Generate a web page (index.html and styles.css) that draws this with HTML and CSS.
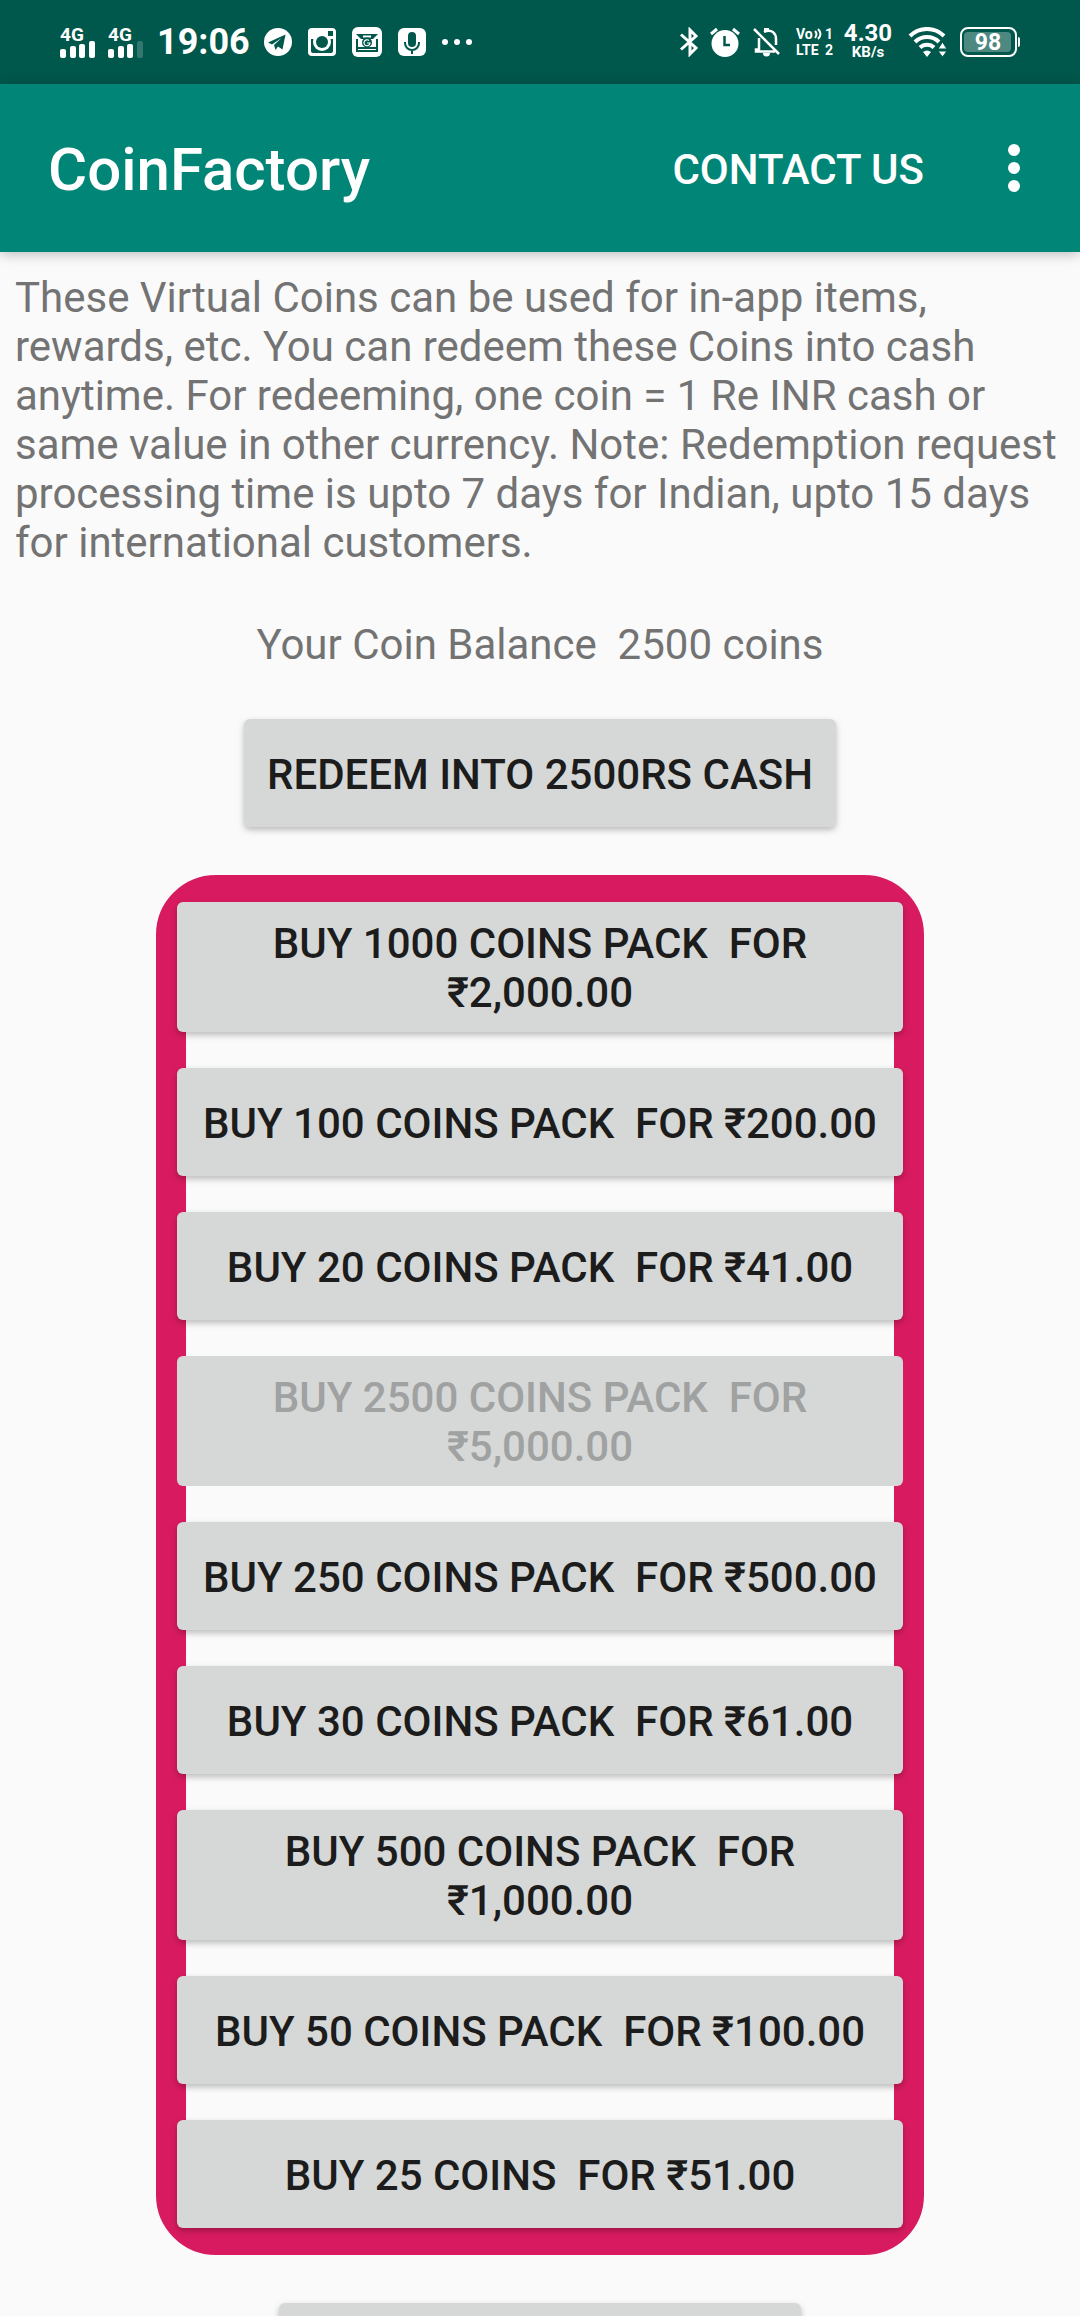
FILE: index.html
```html
<!DOCTYPE html>
<html lang="en">

<head>
    <title>CoinFactory</title>
    <meta charset="utf-8" />
    <meta name="viewport" content="width=device-width, initial-scale=1">
    <link rel="stylesheet" href="styles.css">
</head>

<body>
    <div class="statusbar">
        <div class="status-left">
            <svg class="signal" width="35" height="32" viewBox="0 0 35 32" fill="#fff">
                <text x="0" y="15" class="net-label">4G</text>
                <rect x="0" y="23" width="6" height="9" rx="2" />
                <rect x="10" y="20" width="6" height="12" rx="2" />
                <rect x="19" y="18" width="6" height="14" rx="2" />
                <rect x="29" y="15" width="6" height="17" rx="2" />
            </svg>
            <svg class="signal" width="35" height="32" viewBox="0 0 35 32" fill="#fff">
                <text x="0" y="15" class="net-label">4G</text>
                <rect x="0" y="23" width="6" height="9" rx="2" />
                <rect x="10" y="20" width="6" height="12" rx="2" />
                <rect x="19" y="18" width="6" height="14" rx="2" />
                <rect x="29" y="15" width="6" height="17" rx="2" opacity=".2" />
            </svg>
            <span class="clock">19:06</span>
            <!-- telegram -->
            <svg width="28" height="28" viewBox="0 0 28 28">
                <circle cx="14" cy="14" r="14" fill="#fff" />
                <path d="M4 14.5 21.5 6.5 18.5 21.5 14 18.5 11.5 22 10 17 17.5 10 8 16.5Z" fill="#00574b" />
            </svg>
            <!-- camera -->
            <svg width="28" height="28" viewBox="0 0 28 28">
                <rect width="28" height="28" rx="4" fill="#fff" />
                <path d="M3 11H7A8 8 0 0 0 21 11H25V23Q25 25 23 25H5Q3 25 3 23Z" fill="#00574b" />
                <circle cx="14" cy="14" r="9" fill="#fff" />
                <circle cx="14" cy="14" r="6" fill="#00574b" />
                <rect x="20" y="3" width="5" height="5" fill="#00574b" />
            </svg>
            <!-- mail -->
            <svg width="30" height="30" viewBox="0 0 30 30" fill="none" stroke="#00574b" stroke-width="2">
                <rect width="30" height="30" rx="6" fill="#fff" stroke="none" />
                <path d="M4 7H26L21 12H9Z" fill="#00574b" stroke="none" />
                <path d="M11 9.5H19" stroke="#fff" />
                <path d="M5 12V24H25V12M5 21H25" />
                <circle cx="15" cy="15.500" r="5" fill="#00574b" stroke="none" />
                <path d="M17 13.500A3 3 0 1 0 18 16H15" stroke="#fff" stroke-width="1.200" />
            </svg>
            <!-- microphone -->
            <svg width="28" height="28" viewBox="0 0 28 28" fill="none" stroke="#00574b" stroke-width="2">
                <rect width="28" height="28" rx="6" fill="#fff" stroke="none" />
                <rect x="10" y="4" width="8" height="15" rx="4" fill="#00574b" stroke="none" />
                <path d="M7 14V15A7 7 0 0 0 21 15V14M14 22V26" />
            </svg>
            <svg width="30" height="6" viewBox="0 0 30 6" fill="#fff">
                <circle cx="3" cy="3" r="3" />
                <circle cx="15" cy="3" r="3" />
                <circle cx="27" cy="3" r="3" />
            </svg>
        </div>
        <div class="status-right">
            <!-- bluetooth -->
            <svg width="18" height="30" viewBox="0 0 18 30" fill="none" stroke="#fff" stroke-width="3">
                <path d="M1 7.500 16 21 10 27V3L16 9 1 22.500" />
            </svg>
            <!-- alarm -->
            <svg width="34" height="30" viewBox="0 0 34 30" fill="none" stroke="#fff" stroke-width="3">
                <circle cx="17" cy="16.500" r="13.500" fill="#fff" stroke="none" />
                <path d="M3 7 9 2M31 7 25 2" />
                <path d="M16.500 9V18H22" stroke="#00574b" stroke-width="2.500" />
            </svg>
            <!-- muted bell -->
            <svg width="34" height="30" viewBox="0 0 34 30" fill="none" stroke="#fff" stroke-width="2.500">
                <path d="M7 11V22.500H4V24.500H23M12 5C20 1 24 7 24 12V18M2 2 27 27" />
                <path d="M12 2.500H17" stroke-width="3" />
                <path d="M11 26H18A3.500 3.500 0 0 1 11 26Z" fill="#fff" stroke="none" />
            </svg>
            <!-- volte -->
            <svg class="volte" width="38" height="34" viewBox="0 0 38 34" fill="#fff">
                <text x="0" y="14">Vo</text>
                <path d="M19 6Q22 9 19 13M22 4Q27 9 22 14" fill="none" stroke="#fff" stroke-width="2" />
                <text x="29" y="14">1</text>
                <text x="0" y="30">LTE</text>
                <text x="29" y="30">2</text>
            </svg>
            <div class="netspeed">
                <span class="rate">4.30</span>
                <span class="unit">KB/s</span>
            </div>
            <!-- wifi -->
            <svg width="48" height="30" viewBox="0 0 48 30" fill="none" stroke="#fff" stroke-width="4">
                <path d="M8 9A24 24 0 0 1 42 9M13 15A17 17 0 0 1 37 15M18 20.500A10 10 0 0 1 32 20.500" />
                <path d="M25 30 21 25A6 6 0 0 1 29 25Z" fill="#fff" stroke="none" />
                <path d="M36 22 40.500 15 45 22ZM36 24H45L40.500 30Z" fill="#fff" stroke="#00574b" stroke-width="1" />
            </svg>
            <!-- battery -->
            <svg width="60" height="30" viewBox="0 0 60 30">
                <rect x="1" y="1" width="55" height="28" rx="7" fill="none" stroke="#fff" stroke-width="2" />
                <rect x="4" y="5" width="47" height="20" rx="4" fill="#fff" opacity=".3" />
                <path d="M58 10Q60 10 60 12V18Q60 20 58 20Z" fill="#fff" />
                <text x="28" y="23" class="battery">98</text>
            </svg>
        </div>
    </div>

    <header class="appbar">
        <h1>CoinFactory</h1>
        <button class="contact">CONTACT US</button>
        <button class="more" aria-label="More options">
            <svg width="12" height="48" viewBox="0 0 12 48" fill="#fff">
                <circle cx="6" cy="6" r="6" />
                <circle cx="6" cy="24" r="6" />
                <circle cx="6" cy="42" r="6" />
            </svg>
        </button>
    </header>

    <main class="content">
        <p class="info">These Virtual Coins can be used for in-app items, rewards, etc. You can redeem these Coins into cash anytime. For redeeming, one coin = 1 Re INR cash or same value in other currency. Note: Redemption request processing time is upto 7 days for Indian, upto 15 days for international customers.</p>
        <p class="balance">Your Coin Balance&nbsp; 2500 coins</p>
        <button class="btn redeem">REDEEM INTO 2500RS CASH</button>

        <div class="packs">
            <button class="btn">BUY 1000 COINS PACK&nbsp; FOR ₹2,000.00</button>
            <button class="btn">BUY 100 COINS PACK&nbsp; FOR ₹200.00</button>
            <button class="btn">BUY 20 COINS PACK&nbsp; FOR ₹41.00</button>
            <button class="btn" disabled>BUY 2500 COINS PACK&nbsp; FOR ₹5,000.00</button>
            <button class="btn">BUY 250 COINS PACK&nbsp; FOR ₹500.00</button>
            <button class="btn">BUY 30 COINS PACK&nbsp; FOR ₹61.00</button>
            <button class="btn">BUY 500 COINS PACK&nbsp; FOR ₹1,000.00</button>
            <button class="btn">BUY 50 COINS PACK&nbsp; FOR ₹100.00</button>
            <button class="btn">BUY 25 COINS&nbsp; FOR ₹51.00</button>
        </div>

        <button class="btn next" aria-label="More"></button>
    </main>
</body>

</html>
```
FILE: styles.css
```css
* {
    box-sizing: border-box;
}

body {
    margin: 0;
    height: 100vh;
    display: flex;
    flex-direction: column;
    overflow: hidden;
    background: #fafafa;
    color: #737373;
    font-family: Roboto, "Noto Sans", sans-serif;
    font-size: 42px;
    line-height: 49px;
}

button {
    border: 0;
    font: inherit;
    font-weight: 500;
    cursor: pointer;
}

/* status bar */
.statusbar {
    flex: none;
    display: flex;
    justify-content: space-between;
    align-items: center;
    height: 84px;
    padding: 0 60px;
    background: #00574b;
    color: #fff;
}

.status-left,
.status-right {
    display: flex;
    align-items: center;
}

.status-left {
    gap: 16px;
}

.status-right {
    gap: 10px;
}

.signal {
    overflow: visible;
}

.signal + .signal {
    margin-left: -3px;
}

.clock {
    margin: 0 -2px;
    font-size: 36px;
    font-weight: 700;
    line-height: 36px;
}

.net-label {
    font-size: 19px;
    font-weight: 700;
}

.volte {
    font-size: 14px;
    font-weight: 700;
}

.battery {
    font-size: 23px;
    font-weight: 700;
    text-anchor: middle;
    fill: #fff;
}

.netspeed {
    display: flex;
    flex-direction: column;
    align-items: center;
    width: 48px;
    font-weight: 700;
}

.rate {
    font-size: 24px;
    line-height: 20px;
}

.unit {
    font-size: 15px;
    line-height: 18px;
}

/* app bar */
.appbar {
    flex: none;
    display: flex;
    align-items: center;
    height: 168px;
    padding: 0 48px;
    background: #008577;
    color: #fff;
    box-shadow: 0 2px 12px rgba(0, 0, 0, .25);
}

.appbar h1 {
    flex: 1;
    margin: 0;
    padding-top: 4px;
    font-size: 60px;
    font-weight: 500;
    line-height: 70px;
}

.contact,
.more {
    padding: 0;
    background: none;
    color: inherit;
}

.contact {
    padding-top: 2px;
}

.more {
    display: flex;
    justify-content: center;
    width: 36px;
    margin-left: 72px;
}

/* content */
.content {
    flex: 1;
    min-height: 0;
    display: flex;
    flex-direction: column;
    align-items: center;
    overflow: hidden;
    padding-top: 21px;
}

.content > * {
    flex: none;
}

.info {
    margin: 0;
    padding: 0 15px;
}

.balance {
    margin: 53px 0 50px;
}

.btn {
    min-height: 108px;
    padding: 17px 23px 15px;
    border-radius: 6px;
    background: #d6d8d7;
    color: #1c1c1c;
    box-shadow: 0 3px 6px rgba(0, 0, 0, .25);
}

.btn:disabled {
    color: #a0a1a1;
    box-shadow: none;
    cursor: default;
}

.packs {
    align-self: stretch;
    display: flex;
    flex-direction: column;
    gap: 36px;
    margin: 48px 156px;
    border: 30px solid #d81b60;
    border-radius: 60px;
}

/* buttons lap over the frame */
.packs .btn {
    margin: 0 -9px;
}

.packs .btn:first-child {
    margin-top: -3px;
}

.packs .btn:last-child {
    margin-bottom: -3px;
}

.next {
    width: 522px;
}
```
